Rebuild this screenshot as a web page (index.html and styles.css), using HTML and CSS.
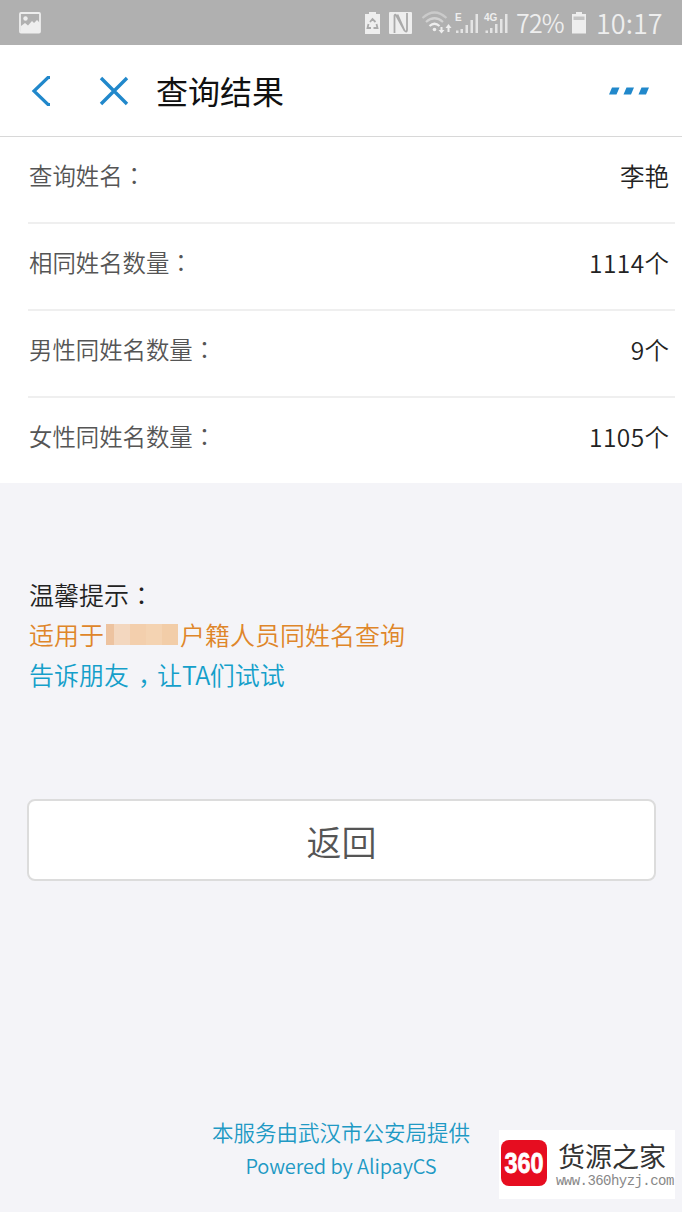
FILE: index.html
```html
<!DOCTYPE html>
<html lang="zh-CN">
<head>
<meta charset="utf-8">
<title>查询结果</title>
<link rel="stylesheet" href="styles.css">
</head>
<body>
<div class="screen">
  <div class="status">
    <svg class="photo" width="22" height="22" viewBox="0 0 22 22"><rect x="1" y="1" width="20" height="19.5" rx="1" fill="none" stroke="#eee" stroke-width="1.8"/><circle cx="6.500" cy="6.5" r="2.2" fill="#eee"/><path d="M2 14L6 11L9 13.500L13 9L15 11L18 8L21 11V20H2Z" fill="#eee"/></svg>
    <svg class="signals" width="146" height="26" viewBox="364 9 146 26">
      <path d="M365 13h4v-2h7v2h4v20h-15z" fill="#eee"/>
      <path d="M370 21l2.500-3l3 3M376.500 23l1 4h-4M368.500 23l-1 4h3.500" fill="none" stroke="#aaa" stroke-width="1.8"/>
      <path d="M390 11h21q1 0 1 1v20q0 1-1 1h-21q-1 0-1-1v-20q0-1 1-1z" fill="#eee"/>
      <path d="M394.500 32V14.500Q395 12.500 396.500 15L404.500 29.500M397.500 13.500L404.500 29.500Q406.500 32 407 29V12" fill="none" stroke="#aaa" stroke-width="1.800"/>
      <g fill="none" stroke-width="2.200"><path d="M422.500 17q12-11 24 0" stroke="#cacaca"/><path d="M426 21q8.500-7.500 17 0" stroke="#d2d2d2"/><path d="M429.500 25q5-4.500 10 0" stroke="#eee"/></g>
      <circle cx="434.500" cy="28.500" r="1.800" fill="#eee"/>
      <path d="M440.500 26h2v3h2l-3 3.500l-3-3.500h2zM447.500 31h2v-4h2l-3-4l-3 4h2z" fill="#eee"/>
      <path d="M456 29.500h2.500V32H456zM460.500 28h2.500v4h-2.500zM465.500 24h2.500v8h-2.500zM470.500 19h2.500v13h-2.500zM475.500 13h2.500v19h-2.500zM485.500 29.500h2.500V32h-2.500zM490 27h2.500v5H490zM495 23h2.500v9H495zM500 18h2.500v14H500zM505 13h2.500v19H505z" fill="#e4e4e4"/>
      <text x="455" y="20" class="net">E</text><text x="484" y="20" class="net">4G</text>
    </svg>
    <span class="percent">72%</span>
    <svg class="battery" width="16" height="24" viewBox="0 0 16 24"><path d="M1 3H5V1H11V3H15V22.500H1Z" fill="#eee"/><path d="M2.500 5.500H13.500V9H2.500Z" fill="#c4c4c4"/></svg>
    <span class="clock">10:17</span>
  </div>
  <header class="bar">
    <svg class="back" width="20" height="30" viewBox="0 0 20 30"><path d="M19 1.500H17L3 15L17 28.500H19" fill="none" stroke="#2188cb" stroke-width="3.200"/></svg>
    <svg class="close" width="30" height="30" viewBox="0 0 30 30"><path d="M2 2L28 28M28 2L2 28" fill="none" stroke="#2188cb" stroke-width="3.400"/></svg>
    <h1 class="title">查询结果</h1>
    <svg class="more" width="42" height="8" viewBox="0 0 42 8"><path d="M4 .5H11.500L8.500 7.500H1ZM18.500 .5H26L23 7.500H15.500ZM33.500 .5H41L38 7.500H30.500Z" fill="#2188cb"/></svg>
  </header>
  <main>
    <div class="list">
      <div class="row"><span class="label">查询姓名<span class="colon" lang="zh-TW">：</span></span><span class="value">李艳</span></div>
      <div class="row"><span class="label">相同姓名数量<span class="colon" lang="zh-TW">：</span></span><span class="value"><span class="num">1114</span>个</span></div>
      <div class="row"><span class="label">男性同姓名数量<span class="colon" lang="zh-TW">：</span></span><span class="value"><span class="num">9</span>个</span></div>
      <div class="row"><span class="label">女性同姓名数量<span class="colon" lang="zh-TW">：</span></span><span class="value"><span class="num">1105</span>个</span></div>
    </div>
    <div class="tips">
      <p>温馨提示<span class="colon" lang="zh-TW">：</span></p>
      <p class="orange">适用于<span class="mask"></span>户籍人员同姓名查询</p>
      <p class="blue">告诉朋友<span class="comma">，</span>让<span class="ta">TA</span>们试试</p>
    </div>
    <button class="return">返回</button>
  </main>
  <footer class="foot">
    <p class="provider">本服务由武汉市公安局提供</p>
    <p class="powered">Powered by AlipayCS</p>
  </footer>
  <div class="mark">
    <div class="logo"><svg width="46" height="46" viewBox="0 0 46 46"><text class="logo-text" x="23" y="33" text-anchor="middle" textLength="39" lengthAdjust="spacingAndGlyphs">360</text></svg></div>
    <div class="mark-text"><span class="mark-name">货源之家</span><span class="mark-url">www.360hyzj.com</span></div>
  </div>
</div>
</body>
</html>
```
FILE: styles.css
```css
* { box-sizing: border-box; }
body { margin: 0; font-family: "Noto Sans CJK SC", sans-serif; font-weight: 350; }
p, h1 { margin: 0; font-weight: inherit; }
svg { display: block; flex: none; }
.screen { position: relative; width: 682px; height: 1212px; background: #f4f4f8; display: flex; flex-direction: column; overflow: hidden; }
.status { height: 45px; flex: none; background: #b0b0b0; display: flex; align-items: center; padding-left: 19px; color: #eee; font-size: 27px; line-height: 45px; white-space: nowrap; }
.signals { margin-left: 323px; }
.net { font: 700 10px "Liberation Sans", sans-serif; fill: #eee; }
.percent { width: 48px; margin-left: 6px; font-size: 25px; letter-spacing: -0.8px; }
.battery { margin-left: 7px; }
.clock { margin-left: 9px; letter-spacing: 0; }
.bar { height: 92px; flex: none; background: #fff; border-bottom: 1px solid #d8d8d8; display: flex; align-items: center; padding: 0 32px 0 31px; }
.close { margin-left: 48px; }
.title { margin-left: 27px; padding-bottom: 1px; font-size: 32px; line-height: 46px; font-weight: 400; color: #111; }
.more { margin-left: auto; }
.list { background: #fff; height: 346px; padding: 0 7px 0 28px; }
.row { height: 87px; display: flex; justify-content: space-between; border-bottom: 2px solid #efefef; padding: 19px 6px 0 1px; line-height: 38px; }
.row:last-child { border-bottom: 0; }
.label { display: flex; font-size: 23.4px; color: #555; }
.value { padding-top: 1px; font-size: 24.5px; color: #222; }
.num { letter-spacing: 0.4px; }
.colon { font-family: "Noto Sans CJK TC", sans-serif; text-spacing-trim: space-all; }
.tips { padding: 91px 29px 0; font-size: 25px; line-height: 40px; color: #222; }
.tips p { height: 40px; display: flex; }
.tips .orange { color: #df862a; }
.tips .blue { color: #159fca; }
.mask { width: 72px; height: 21px; margin: 10px 2px 0 2px; background: linear-gradient(90deg, #edc3a0 0 8px, #f3d7bf 8px 24px, #f3cfad 24px 40px, #f4d3b2 40px 56px, #f2cda8 56px); }
.comma { width: 28px; padding-left: 9px; font-feature-settings: "halt"; }
.ta { letter-spacing: -0.5px; }
.return { display: block; width: 629px; height: 82px; margin: 105px 0 0 27px; padding: 0; border: 2px solid #dcdcdc; border-radius: 8px; background: #fff; color: #555; font: 350 35px/77px "Noto Sans CJK SC", sans-serif; }
.foot { margin-top: auto; padding-bottom: 29px; text-align: center; color: #2099c4; }
.provider { font-size: 21.500px; line-height: 34px; }
.powered { font-size: 20px; line-height: 34px; letter-spacing: -0.1px; }
.mark { position: absolute; left: 499px; top: 1130px; width: 176px; height: 69px; background: #fff; display: flex; padding: 10px 0 0 2px; }
.logo { width: 46px; height: 46px; flex: none; border-radius: 8px; background: #e60d20; }
.logo-text { font: 700 29px "Liberation Sans", sans-serif; fill: #fff; stroke: #fff; stroke-width: 0.8px; }
.mark-text { display: flex; flex-direction: column; margin-left: 9px; white-space: nowrap; }
.mark-name { font-size: 27px; line-height: 32px; font-weight: 400; color: #333; margin-left: 2px; }
.mark-url { margin-top: 1px; font: 14px/16px "Liberation Mono", monospace; letter-spacing: -0.550px; color: #888; }
```
